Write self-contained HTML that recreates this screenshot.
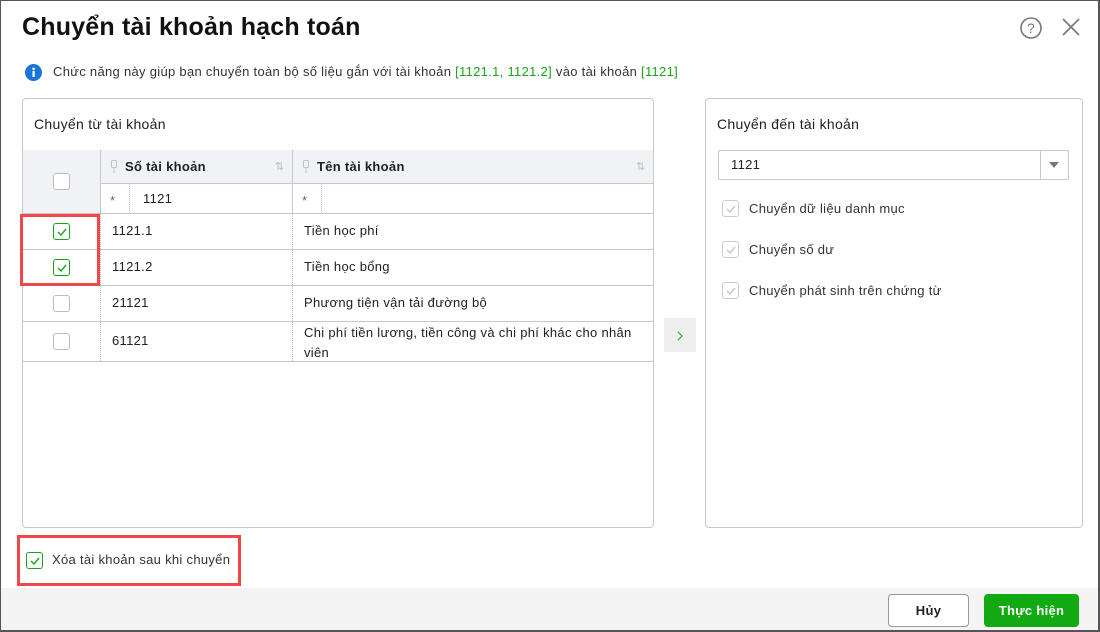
<!DOCTYPE html>
<html><head><meta charset="utf-8"><style>
*{box-sizing:border-box;margin:0;padding:0}
body{width:1100px;height:632px;position:relative;overflow:hidden;background:#fff;font-family:"Liberation Sans",sans-serif;color:#212121;font-size:13px;letter-spacing:0.3px}
.a{position:absolute}
.frame{left:0;top:0;width:1100px;height:632px;border:1px solid #555;border-width:1px 2px 2px 1px;z-index:10;pointer-events:none}
.panel{border:1px solid #c8c8c8;border-radius:4px}
.cb{position:absolute;width:17px;height:17px;border:1px solid #bbb;border-radius:3px;background:#fff}
.cb.g{border-color:#1aa31a}
.cb svg{position:absolute;left:2px;top:2px}
.hl{position:absolute;background:#c8c8cc}
.vd{position:absolute;border-left:1px dotted #bbb}
.t{position:absolute;white-space:nowrap}
.red{position:absolute;border:3px solid #f0474b}
</style></head><body>
<div class="a frame"></div>
<div class="t" style="left:22px;top:13px;font-size:25px;font-weight:bold;color:#111;letter-spacing:0.2px">Chuyển tài khoản hạch toán</div>
<svg class="a" style="left:1019px;top:16px" width="24" height="24"><circle cx="12" cy="12" r="10" fill="none" stroke="#777" stroke-width="1.6"/><text x="12" y="17" text-anchor="middle" font-size="14" font-family="Liberation Sans" fill="#777">?</text></svg>
<svg class="a" style="left:1061px;top:17px" width="20" height="20"><path d="M2 2L18 18M18 2L2 18" stroke="#777" stroke-width="1.6"/></svg>
<svg class="a" style="left:25px;top:64px" width="17" height="17"><circle cx="8.5" cy="8.5" r="8.5" fill="#1b75d8"/><rect x="7.5" y="7" width="2.2" height="6" fill="#fff"/><circle cx="8.6" cy="4.8" r="1.3" fill="#fff"/></svg>
<div class="t" style="left:53px;top:64px;color:#333">Chức năng này giúp bạn chuyển toàn bộ số liệu gắn với tài khoản <span style="color:#1aa31a">[1121.1, 1121.2]</span> vào tài khoản <span style="color:#1aa31a">[1121]</span></div>

<div class="a panel" style="left:22px;top:98px;width:632px;height:430px"></div>
<div class="t" style="left:34px;top:116px;font-size:14px">Chuyển từ tài khoản</div>
<div class="a" style="left:23px;top:150px;width:630px;height:33px;background:#f1f2f5"></div>
<div class="a" style="left:23px;top:183px;width:77px;height:30px;background:#f1f2f5"></div>
<div class="hl" style="left:23px;top:213px;width:630px;height:1px"></div>
<div class="hl" style="left:100px;top:183px;width:553px;height:1px"></div>
<div class="hl" style="left:23px;top:249px;width:630px;height:1px"></div>
<div class="hl" style="left:23px;top:285px;width:630px;height:1px"></div>
<div class="hl" style="left:23px;top:321px;width:630px;height:1px"></div>
<div class="hl" style="left:23px;top:361px;width:630px;height:1px"></div>
<div class="hl" style="left:100px;top:150px;width:1px;height:63px"></div>
<div class="hl" style="left:292px;top:150px;width:1px;height:63px"></div>
<div class="vd" style="left:100px;top:213px;height:148px"></div>
<div class="vd" style="left:292px;top:213px;height:148px"></div>
<div class="vd" style="left:129px;top:184px;height:29px"></div>
<div class="vd" style="left:321px;top:184px;height:29px"></div>
<svg class="a" style="left:110px;top:160px" width="8" height="14"><rect x="1.5" y="0.5" width="5" height="7" rx="1" fill="none" stroke="#c4c4c4"/><path d="M4 8v5" stroke="#c4c4c4"/></svg>
<div class="t" style="left:125px;top:159px;font-weight:bold">Số tài khoản</div>
<div class="t" style="left:275px;top:160px;color:#bbb;font-size:11px">⇅</div>
<svg class="a" style="left:302px;top:160px" width="8" height="14"><rect x="1.5" y="0.5" width="5" height="7" rx="1" fill="none" stroke="#c4c4c4"/><path d="M4 8v5" stroke="#c4c4c4"/></svg>
<div class="t" style="left:317px;top:159px;font-weight:bold">Tên tài khoản</div>
<div class="t" style="left:636px;top:160px;color:#bbb;font-size:11px">⇅</div>
<div class="t" style="left:110px;top:193px;color:#666">*</div>
<div class="t" style="left:143px;top:191px">1121</div>
<div class="t" style="left:302px;top:193px;color:#666">*</div>
<div class="cb" style="left:53px;top:173px"></div>
<div class="cb g" style="left:53px;top:223px"><svg width="12" height="12"><path d="M2 6l3 3 5-6" stroke="#1aa31a" stroke-width="1.4" fill="none"/></svg></div>
<div class="cb g" style="left:53px;top:259px"><svg width="12" height="12"><path d="M2 6l3 3 5-6" stroke="#1aa31a" stroke-width="1.4" fill="none"/></svg></div>
<div class="cb" style="left:53px;top:295px"></div>
<div class="cb" style="left:53px;top:333px"></div>
<div class="t" style="left:112px;top:223px">1121.1</div>
<div class="t" style="left:304px;top:223px">Tiền học phí</div>
<div class="t" style="left:112px;top:259px">1121.2</div>
<div class="t" style="left:304px;top:259px">Tiền học bổng</div>
<div class="t" style="left:112px;top:295px">21121</div>
<div class="t" style="left:304px;top:295px">Phương tiện vận tải đường bộ</div>
<div class="t" style="left:112px;top:333px">61121</div>
<div class="t" style="left:304px;top:323px;line-height:20px">Chi phí tiền lương, tiền công và chi phí khác cho nhân<br>viên</div>
<div class="red" style="left:20px;top:214px;width:80px;height:72px"></div>

<div class="a" style="left:664px;top:318px;width:32px;height:34px;background:#eee"></div>
<svg class="a" style="left:676px;top:330px" width="8" height="12"><path d="M2 2l4 4-4 4" stroke="#1aa31a" stroke-width="1" fill="none"/></svg>

<div class="a panel" style="left:705px;top:98px;width:378px;height:430px"></div>
<div class="t" style="left:717px;top:116px;font-size:14px">Chuyển đến tài khoản</div>
<div class="a" style="left:718px;top:150px;width:351px;height:30px;border:1px solid #c8c8c8;border-radius:2px"></div>
<div class="hl" style="left:1040px;top:151px;width:1px;height:28px"></div>
<svg class="a" style="left:1049px;top:162px" width="10" height="6"><path d="M0 0h10L5 6z" fill="#777"/></svg>
<div class="t" style="left:731px;top:157px">1121</div>
<div class="cb" style="left:722px;top:200px;border-color:#ccc"><svg width="12" height="12"><path d="M2 6l3 3 5-6" stroke="#bbb" stroke-width="1.2" fill="none"/></svg></div>
<div class="t" style="left:749px;top:201px;color:#333">Chuyển dữ liệu danh mục</div>
<div class="cb" style="left:722px;top:241px;border-color:#ccc"><svg width="12" height="12"><path d="M2 6l3 3 5-6" stroke="#bbb" stroke-width="1.2" fill="none"/></svg></div>
<div class="t" style="left:749px;top:242px;color:#333">Chuyển số dư</div>
<div class="cb" style="left:722px;top:282px;border-color:#ccc"><svg width="12" height="12"><path d="M2 6l3 3 5-6" stroke="#bbb" stroke-width="1.2" fill="none"/></svg></div>
<div class="t" style="left:749px;top:283px;color:#333">Chuyển phát sinh trên chứng từ</div>

<div class="red" style="left:17px;top:535px;width:224px;height:51px"></div>
<div class="cb g" style="left:26px;top:552px"><svg width="12" height="12"><path d="M2 6l3 3 5-6" stroke="#1aa31a" stroke-width="1.4" fill="none"/></svg></div>
<div class="t" style="left:52px;top:552px;color:#333">Xóa tài khoản sau khi chuyển</div>

<div class="a" style="left:0;top:588px;width:1100px;height:44px;background:#f4f4f4"></div>
<div class="a" style="left:888px;top:594px;width:81px;height:33px;border:1px solid #999;border-radius:4px;background:#fff;text-align:center;line-height:31px;font-weight:bold">Hủy</div>
<div class="a" style="left:984px;top:594px;width:95px;height:33px;border-radius:4px;background:#13a913;color:#fff;text-align:center;line-height:33px;font-weight:bold">Thực hiện</div>
</body></html>
